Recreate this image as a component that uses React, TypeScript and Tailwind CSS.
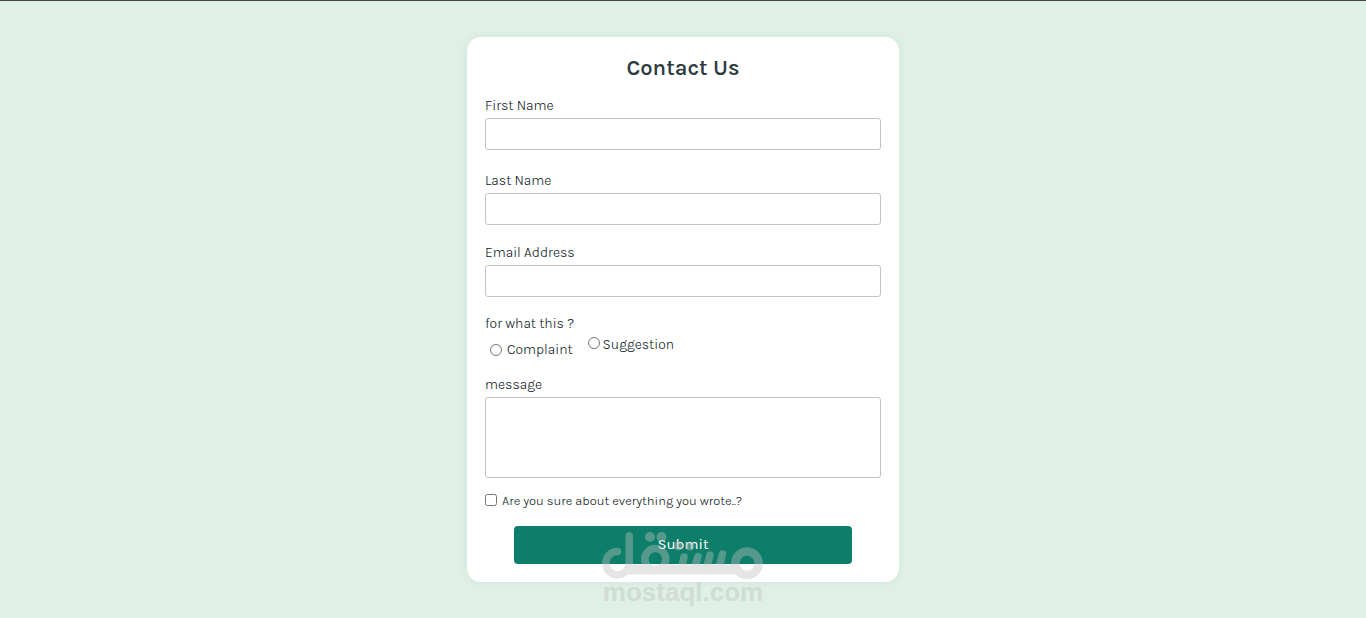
import type { InputHTMLAttributes } from "react";

type FieldProps = InputHTMLAttributes<HTMLInputElement> & { label: string; id: string };

function Field({ label, id, ...rest }: FieldProps) {
  return (
    <div className="flex flex-col gap-0.5">
      <label htmlFor={id}>{label}</label>
      <input id={id} {...rest} className="h-8 w-full rounded-[3px] border border-[#c4c4c4] bg-white px-2 outline-none" />
    </div>
  );
}

function Watermark() {
  return (
    <div className="pointer-events-none absolute inset-x-0 -bottom-6 flex flex-col items-center opacity-40">
      <svg width="162" height="53" viewBox="0 0 162 53" className="-mb-0.5" fill="none" stroke="#c0c0c0" strokeLinecap="round" aria-hidden="true">
        <path strokeWidth="7.500" d="M15.500 24.500A11.700 11.700 0 1 0 27.200 36.200V9" />
        <circle strokeWidth="7.500" cx="53.300" cy="32" r="10.500" />
        <path strokeWidth="7.500" d="M82 30L80 39M96 29.500L93 39M108 28L105 39M120.500 27L117.500 39" />
        <circle strokeWidth="8.500" cx="145" cy="36.200" r="11.700" />
        <path fill="#c0c0c0" stroke="none" d="M27 37.500H44L53 42L64 37.500H134L140 47.500H22Z" />
        <g fill="#c0c0c0" stroke="none">
          <circle cx="48" cy="10" r="5" />
          <circle cx="59.500" cy="10" r="5" />
          <circle cx="76.500" cy="19" r="4.500" />
          <circle cx="88" cy="19" r="4.500" />
        </g>
      </svg>
      <span className="font-['Liberation_Sans',sans-serif] text-[26px] leading-7 font-bold text-[#bcbfbe]">mostaql.com</span>
    </div>
  );
}

export default function App() {
  return (
    <main className="min-h-screen border-t border-[#444] bg-[#dff0e6] px-4 py-9 font-[Karla,Inter,sans-serif] text-sm leading-5 font-light text-[#0a161b]">
      <div className="relative mx-auto max-w-[432px]">
        <form className="flex flex-col rounded-[14px] bg-white px-[18px] pt-4 pb-[18px] shadow-[0_0_10px_rgba(0,0,0,0.06)]" onSubmit={(e) => e.preventDefault()}>
          <h1 className="mb-[13px] text-center text-[22px] leading-[30px] font-semibold text-[#2d3b41]">Contact Us</h1>
          <div className="flex flex-col gap-[18px]">
            <div className="flex flex-col gap-[21px]">
              <Field id="first" label="First Name" type="text" />
              <Field id="last" label="Last Name" type="text" />
            </div>
            <Field id="email" label="Email Address" type="email" />
          </div>
          <fieldset className="mt-[17px]">
            <legend>for what this ?</legend>
            <div className="flex items-start gap-[15px] pl-[5px]">
              <label className="mt-1.5 flex items-center gap-[5px]"><input type="radio" name="kind" className="size-3" />Complaint</label>
              <label className="flex items-start gap-[3px]"><input type="radio" name="kind" className="mt-[3px] size-3" /><span className="mt-px">Suggestion</span></label>
            </div>
          </fieldset>
          <label htmlFor="message" className="mt-[15px]">message</label>
          <textarea id="message" className="mt-0.5 h-[81px] resize-none rounded-[3px] border border-[#c4c4c4] p-2 outline-none" />
          <label className="mt-[13px] flex items-start gap-[5px] text-[13px] leading-5"><input type="checkbox" className="mt-[3px] size-3" />Are you sure about everything you wrote..?</label>
          <button type="submit" className="mx-[29px] mt-[15px] h-[38px] rounded bg-[#0d7e69] pb-0.5 text-[15px] font-normal text-white">Submit</button>
        </form>
        <Watermark />
      </div>
    </main>
  );
}
